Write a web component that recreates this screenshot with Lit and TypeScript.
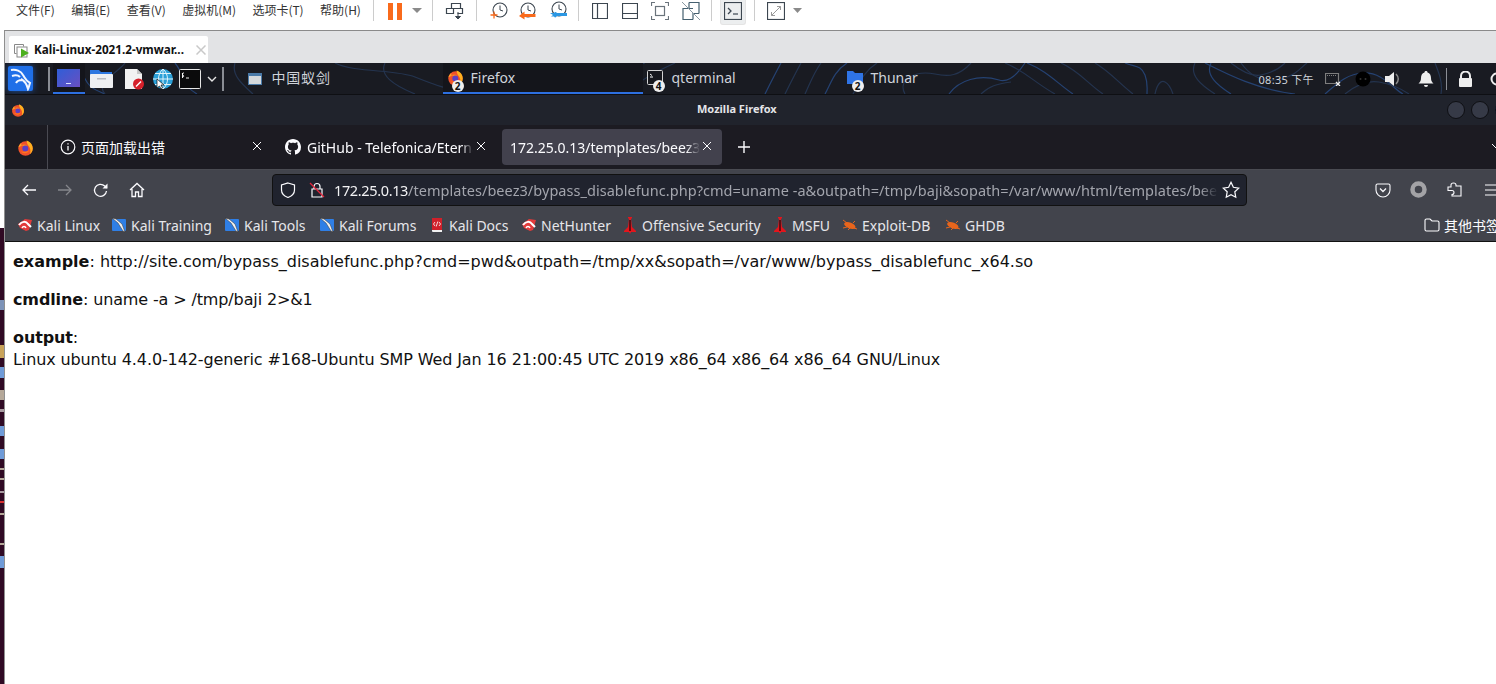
import { LitElement, html, css, svg } from "lit";
import { customElement } from "lit/decorators.js";

const ffIcon = (s: number) => html`<svg width=${s} height=${s} viewBox="0 0 16 16">
  <circle cx="8" cy="9" r="6.800" fill="#f0512a"/><path d="M9 1.500c3.500 1 5.800 4 5.800 7.500 0 2.200-1 4-2.600 5.200 1-2.600.5-5.800-1.600-8C9.800 5 9 3.500 9 1.500z" fill="#ffb01f"/><path d="M1.400 8c.4-2 1.400-3.400 2.800-4.200-.4 1-.2 1.800.4 2.400z" fill="#ffa024"/><path d="M4 5.800c1.500-1 4-1 5.500.2l-2 1z" fill="#ff8a24"/><circle cx="7.800" cy="9" r="2.800" fill="#5b3fc4"/><path d="M3.500 11.500c2.500 2.800 6.500 2.300 8-1-2 1.600-5.500 2-8 1z" fill="#ff7a1c"/></svg>`;

const kaliFav = html`<svg width="16" height="16" viewBox="0 0 16 16"><path d="M1 7 8 2l7 1-3 10-3 1-6-3z" fill="#e23b3b"/><path d="M2 8c3-4 7-4 9-1l3 3" fill="none" stroke="#fff" stroke-width="2"/><path d="M5 11c1-2 3-2 4 0" fill="none" stroke="#fff" stroke-width="1.500"/></svg>`;
const kaliBlue = html`<svg width="16" height="16" viewBox="0 0 16 16"><rect x="1" y="2" width="14" height="12" rx="1" fill="#2f7fe6"/><path d="M1 1l6 5 5 8 2 1-3-8-6-5z" fill="#f2f2f2" stroke="#333" stroke-width=".5"/></svg>`;
const docFav = html`<svg width="16" height="16" viewBox="0 0 16 16"><path d="M3 1h10v12H3z" fill="#d0202a"/><path d="M3 13h10v2H4a1 1 0 0 1-1-1z" fill="#f1f1f1"/><path d="M6 5 4.500 7 6 9M10 5l1.500 2L10 9M8.800 4.500 7.200 9.500" fill="none" stroke="#fff" stroke-width=".8"/></svg>`;
const offsec = html`<svg width="16" height="18" viewBox="0 0 16 18"><path d="M6 1h4v1l-1 1 1 8 4 4v1H9l-1 2-1-2H2v-1l4-4 1-8-1-1z" fill="#e3151c"/><path d="M8 4v11" stroke="#3a0a0c" stroke-width="1.500"/></svg>`;
const roach = html`<svg width="16" height="14" viewBox="0 0 16 14"><ellipse cx="8" cy="7.500" rx="6" ry="3" transform="rotate(22 8 7)" fill="#e8651c"/><path d="M1 2l4 3M1 10l4-1M6 12l2-2M13 3l-2 2M15 11l-3-1" stroke="#e8651c" stroke-width="1"/></svg>`;

/* width of each bookmark slot = distance to the next one */
const bookmarks: [unknown, string, number][] = [
  [kaliFav, "Kali Linux", 94],
  [kaliBlue, "Kali Training", 113],
  [kaliBlue, "Kali Tools", 95],
  [kaliBlue, "Kali Forums", 110],
  [docFav, "Kali Docs", 92],
  [kaliFav, "NetHunter", 101],
  [offsec, "Offensive Security", 150],
  [offsec, "MSFU", 70],
  [roach, "Exploit-DB", 103],
  [roach, "GHDB", 70],
];

/* fragments of the desktop text showing in the left margin: [height, colour] */
const scraps: [number, string][] = [
  [72, "#300a24"], [10, "#7d93b8"], [35, "#300a24"], [13, "#c9a35a"], [9, "#300a24"], [11, "#6f9bd8"], [12, "#300a24"], [10, "#b5a899"],
  [9, "#300a24"], [3, "#a89aa0"], [14, "#300a24"], [10, "#6f9bd8"], [13, "#300a24"], [10, "#6f9bd8"], [9, "#300a24"], [2, "#b5a899"], [8, "#300a24"], [2, "#b5a899"],
  [11, "#300a24"], [2, "#a89aa0"], [8, "#300a24"], [2, "#d83030"], [10, "#300a24"], [2, "#b5a899"], [28, "#300a24"], [2, "#b5a899"], [11, "#300a24"], [12, "#6f9bd8"],
];

const contours = [
  "M60 0C90 12 70 20 100 31", "M330 0c20 10 60 6 80 14s30 12 60 17", "M120 0c-10 12 -30 20 -20 31", "M170 0c10 12 6 22 22 31", "M230 0c-4 12 8 22 18 31", "M380 0c-6 12 8 22 30 31",
  "M560 31c6-10 20-26 60-31", "M590 31c8-10 26-24 50-31", "M620 31c10-10 30-22 50-31", "M760 31c4-8 10-20 16-31", "M780 31c4-8 10-20 16-31", "M800 31c4-8 8-20 16-31",
  "M820 31c6-10 8-22 22-31", "M848 31c6-10 10-22 24-31", "M900 31c-8-14 10-24 30-20 14 3 24 2 36-11", "M944 31c10-14 30-20 50-14 10 3 20-8 26-17",
  "M976 31c8-8 16-10 30-12", "M1000 0c20 8 30 20 50 31", "M1022 0c20 8 30 20 46 31", "M1056 0c18 8 26 20 42 31", "M1090 0c14 8 24 20 38 31",
  "M1120 0c10 4 16 2 20 12 3 8 2 12 2 19", "M1150 31c2-10 6-14 10-12 4 2 6 6 8 12", "M1190 0c-6 12 6 22 20 31", "M1206 0c-6 12 6 22 20 31",
  "M1226 0c10 8 20 14 30 12 10-2 18-6 24-12", "M1236 0c10 14 24 20 40 16s20-12 26-16", "M1320 31c10-8 20-20 38-21 20-1 30 16 40 21",
  "M1340 31c12-10 22-14 34-12s24 8 30 12", "M1430 0c4 10 8 20 6 31", "M1200 0c20 10 50 26 90 31",
];

@customElement("app-root")
export class AppRoot extends LitElement {
  static styles = css`
    :host { display: block; width: 1496px; height: 684px; overflow: hidden; background: #fff; font-family: "Noto Sans", "Noto Sans CJK SC", sans-serif; }
    svg { display: block; flex: none; }

    /* VMware toolbar */
    .vm { height: 30px; display: flex; align-items: center; background: #fff; color: #333; font: 12px/20px "Noto Sans CJK SC", "Noto Sans", sans-serif; padding: 0 0 9px 16px; box-sizing: border-box; }
    .menus { display: flex; width: 345px; justify-content: space-between; height: 20px; line-height: 20px; margin-top: -2px; white-space: nowrap; flex: none; }
    .sep { width: 1px; height: 21px; background: #ccc; flex: none; }
    .tools { display: flex; align-items: center; height: 21px; margin-left: 14px; }
    .btn-on { width: 26px; height: 25px; background: #eceeef; border: 1px solid #e4e4e4; border-top: none; border-radius: 0 0 3px 3px; display: flex; justify-content: center; box-sizing: border-box; padding-top: 2px; margin-top: 4px; flex: none; }

    .lower { display: flex; height: 654px; }
    .gutter { width: 4px; flex: none; display: flex; flex-direction: column; }
    .gutter .w { height: 198px; background: #fff; flex: none; }
    .gutter .p { flex: 1; background: #300a24; display: flex; flex-direction: column; }
    .gutter .p span { display: block; flex: none; }
    .main { flex: 1; min-width: 0; display: flex; flex-direction: column; border-left: 1px solid #8f8f8f; border-top: 1px solid #8a8a8a; }

    /* VMware tab strip */
    .vmtabs { height: 32px; background: #e2e3e5; display: flex; align-items: flex-end; padding-left: 4px; box-sizing: border-box; flex: none; }
    .vmtab { width: 199px; height: 27px; background: #fff; border-radius: 2px 2px 0 0; display: flex; align-items: center; box-sizing: border-box; padding-left: 5px; font: 700 11.700px/27px "Noto Sans", sans-serif; color: #111; white-space: nowrap; gap: 4px; }
    .vmtab .t { width: 154px; overflow: hidden; flex: none; }
    .vmtab .x { margin-left: 4px; }

    /* Kali panel */
    .panel { height: 31px; background: #191b22; position: relative; display: flex; align-items: center; flex: none; color: #cfd3da; border-bottom: 1px solid #0e0f13; overflow: hidden; }
    .contours { position: absolute; left: 0; top: 0; }
    .panel > *:not(.contours) { position: relative; }
    .kali { width: 25px; height: 25px; background: #1f6fe8; margin-left: 3px; border-radius: 2px; box-shadow: 0 0 6px #1f6fe8aa; display: flex; align-items: center; justify-content: center; flex: none; }
    .psep { width: 1.500px; height: 24px; background: #8a8d94; flex: none; }
    .launch { display: flex; align-items: center; justify-content: center; height: 31px; flex: none; box-sizing: border-box; }
    .launch.on { border-bottom: 2px solid #2d6fe0; background: #14151b; }
    .app { margin: -3px 0 0 10px; width: 172px; font: 14px "Noto Sans CJK SC", sans-serif; letter-spacing: .8px; flex: none; }
    .task { display: flex; align-items: center; height: 31px; width: 200px; box-sizing: border-box; font-size: 14px; flex: none; position: relative; padding: 0 0 1px 3px; gap: 4px; border-bottom: 2px solid transparent; }
    .task.on { border-bottom-color: #2d6fe0; background: #14151b; }
    .badge { position: absolute; left: 9px; top: 17px; width: 12px; height: 12px; border-radius: 50%; background: #eee; color: #111; font: 700 10px/12px "Noto Sans", sans-serif; text-align: center; }
    .clock { font-size: 11px; margin-left: 216px; white-space: nowrap; letter-spacing: .3px; flex: none; width: 57px; }
    .tray { display: flex; align-items: center; flex: none; }

    /* Firefox title */
    .title { height: 30px; background: #20232c; display: flex; align-items: center; position: relative; flex: none; padding: 0 0 1px 6px; box-sizing: border-box; color: #e4e5e8; font-size: 11px; font-weight: 700; overflow: hidden; }
    .title .name { position: absolute; left: 692px; top: 6px; white-space: nowrap; }
    .title .dots { margin-left: auto; display: flex; gap: 6px; margin-right: -17px; flex: none; }
    .dot { width: 18px; height: 18px; border-radius: 50%; background: #363a47; border: 1px solid #0e0f13; flex: none; box-sizing: border-box; }
    .dot.blue { background: #2f74e6; }

    /* Tabs */
    .tabs { height: 44px; background: #1c1b22; display: flex; align-items: center; flex: none; color: #fbfbfe; font-size: 14px; white-space: nowrap; position: relative; overflow: hidden; }
    .ffbtn { width: 43px; height: 44px; border-right: 1px solid #4a4a52; display: flex; align-items: center; justify-content: center; flex: none; box-sizing: border-box; padding-right: 2px; }
    .tab { height: 36px; display: flex; align-items: center; box-sizing: border-box; position: relative; flex: none; }
    .tab .lbl { overflow: hidden; flex: none; }
    .tab .close { position: absolute; top: 12px; }
    .fade { -webkit-mask-image: linear-gradient(90deg, #000 93%, transparent); mask-image: linear-gradient(90deg, #000 93%, transparent); }
    .tab.sel { background: #42414d; border-radius: 4px; }
    .chev { margin-left: auto; margin-right: -7px; }

    /* Nav */
    .nav { height: 40px; background: #42444c; display: flex; align-items: center; flex: none; color: #fbfbfe; border-top: 1px solid #4a4b52; box-sizing: border-box; }
    .url { width: 975px; height: 32px; background: #20232e; border: 1px solid #111; border-radius: 4px; box-sizing: border-box; display: flex; align-items: center; margin-left: 251px; font-size: 14.500px; letter-spacing: .04px; color: #a3a5ad; white-space: nowrap; flex: none; }
    .url b { font-weight: 400; color: #f2f2f4; letter-spacing: -.36px; }
    .url .txt { width: 884px; overflow: hidden; flex: none; -webkit-mask-image: linear-gradient(90deg, #000 98%, transparent); mask-image: linear-gradient(90deg, #000 98%, transparent); }
    .nav-l { display: flex; align-items: center; gap: 17px; margin-left: 16px; width: 0; }
    .nav-r { display: flex; align-items: center; margin-left: 128px; gap: 19px; flex: none; }

    /* Bookmarks */
    .bm { height: 33px; background: #42444c; display: flex; align-items: center; flex: none; color: #fbfbfe; font-size: 14px; padding-left: 12px; white-space: nowrap; border-bottom: 1px solid #111; box-sizing: border-box; overflow: hidden; }
    .bk { display: flex; align-items: center; gap: 4px; flex: none; color: #e6e6ea; }
    .other { margin-left: auto; display: flex; align-items: center; gap: 4px; margin-right: -4px; flex: none; }
    .cjk { font-family: "Noto Sans CJK SC", sans-serif; }

    /* Page */
    .page { flex: 1; background: #fff; color: #111; font: 16px/22px "DejaVu Sans", sans-serif; padding: 9px 8px 0; min-height: 0; }
    .page p { margin: 0 0 16px; white-space: nowrap; }
    .l2 { letter-spacing: -.13px; }
    .l3 { letter-spacing: -.113px; }
  `;

  private vmTools() {
    const g = "#3c4650";
    return html`<div class="tools">
      <svg width="14" height="18" viewBox="0 0 14 18"><rect x="0" y="1" width="5" height="17" fill="#f96a1b"/><rect x="9" y="1" width="5" height="17" fill="#f96a1b"/></svg>
      <svg width="10" height="6" viewBox="0 0 10 6" style="margin-left:10px"><path d="M0 0h10L5 5z" fill="#8a8a8a"/></svg>
      <div class="sep" style="margin-left:10px"></div>
      <svg width="20" height="20" viewBox="0 0 20 20" style="margin-left:12px"><path d="M1.500 7.500h7v5h-7zM6.500 2.500h9v5h-9zM8.500 7.500h9v5h-5" fill="none" stroke=${g} stroke-width="1.200"/><path d="M13 11v6M10.500 15.500 13 18l2.500-2.500z" fill=${g} stroke=${g}/></svg>
      <div class="sep" style="margin-left:11px"></div>
      <svg width="20" height="20" viewBox="0 0 20 20" style="margin-left:12px"><circle cx="11" cy="9" r="7" fill="none" stroke=${g} stroke-width="1.100"/><path d="M11 4.500V9l3 1" fill="none" stroke=${g}/><path d="M5 10.500v7M1.500 14h7" stroke="#f96a1b" stroke-width="1.300"/></svg>
      <svg width="20" height="20" viewBox="0 0 20 20" style="margin-left:9px"><circle cx="10" cy="9" r="7" fill="none" stroke=${g} stroke-width="1.100"/><path d="M10 4.500V9l3 1" fill="none" stroke=${g}/><path d="M17.500 13H6.500v-2.500L1 15l5.500 3.500V16h11z" fill="#f96a1b"/></svg>
      <svg width="20" height="20" viewBox="0 0 20 20" style="margin-left:11px"><circle cx="10" cy="8" r="7" fill="none" stroke=${g} stroke-width="1.100"/><path d="M10 3.500V8l3 1" fill="none" stroke=${g}/><path d="M1 12h4c1-1.500 2-1 3 0h10v3H8c-1 1.500-2 2-3 .5H2l2-1.500z" fill="#2b97e3"/></svg>
      <div class="sep" style="margin-left:9px"></div>
      <svg width="16" height="16" viewBox="0 0 16 16" style="margin-left:13px"><path d="M.5.500h15v15H.5zM5.500.500v15" fill="none" stroke=${g} stroke-width="1.200"/></svg>
      <svg width="16" height="16" viewBox="0 0 16 16" style="margin-left:14px"><path d="M.5.500h15v15H.5zM.5 10.500h15" fill="none" stroke=${g} stroke-width="1.200"/></svg>
      <svg width="18" height="18" viewBox="0 0 18 18" style="margin-left:13px"><path d="M4 .5H.5V4M14 .5h3.500V4M4 17.500H.5V14M14 17.500h3.500V14" fill="none" stroke="#6a737b" stroke-width="1.200"/><rect x="4.500" y="4.500" width="9" height="9" fill="none" stroke="#6a737b" stroke-width="1.200"/></svg>
      <svg width="18" height="18" viewBox="0 0 18 18" style="margin-left:13px"><path d="M7 .5h10v11M11 17.500H1v-11h10M1 6.500h6V.5M11 17.500V11.500h6" fill="none" stroke="#456070" stroke-width="1.200"/><path d="M0 0l18 18" stroke="#8a98a2" stroke-width="1"/></svg>
      <div class="sep" style="margin-left:11px"></div>
      <div class="btn-on" style="margin-left:8px"><svg width="18" height="18" viewBox="0 0 18 18"><rect x=".5" y=".5" width="17" height="17" fill="none" stroke=${g} stroke-width="1.200"/><path d="M4 6l3 3-3 3" fill="none" stroke=${g} stroke-width="1.300"/><path d="M9 12h5" stroke=${g} stroke-width="1.200"/></svg></div>
      <div class="sep" style="margin-left:8px"></div>
      <svg width="18" height="18" viewBox="0 0 18 18" style="margin-left:12px"><rect x=".5" y=".5" width="17" height="17" fill="none" stroke=${g} stroke-width="1.200"/><path d="M4.500 13.500l9-9M10 4.500h3.500V8M4.500 10v3.500H8" fill="none" stroke="#9a9a9a" stroke-width="1"/></svg>
      <svg width="9" height="5" viewBox="0 0 9 5" style="margin-left:8px"><path d="M0 0h9L4.500 5z" fill="#8a8a8a"/></svg>
    </div>`;
  }

  private panel() {
    return html`<div class="panel">
      <svg class="contours" width="1491" height="31" viewBox="0 0 1491 31">
        ${contours.map((d, i) => svg`<path d=${d} fill="none" stroke=${i % 3 === 0 ? "#254272" : "#24344f"} stroke-width="1.200"/>`)}
      </svg>
      <div class="kali"><svg width="24" height="24" viewBox="0 0 24 24"><path d="M2 3c5-1 10 1 12 5 2 3 3 6 7 8-1 3-1 4-2 6-1-4-3-8-7-10M3 9c3-1 6-1 8 1M13 13c-3 0-5 1-6 3" fill="none" stroke="#f1f6ff" stroke-width="2"/></svg></div>
      <div class="psep" style="margin-left:15px"></div>
      <div class="launch on" style="width:32px;margin-left:3.500px"><svg width="24" height="20" viewBox="0 0 24 20"><defs><linearGradient id="dk" x1="0" y1="0" x2="1" y2="1"><stop offset="0" stop-color="#2f5ed8"/><stop offset="1" stop-color="#6a4fc0"/></linearGradient></defs><rect x="0" y="1" width="23" height="18" fill="url(#dk)"/><rect x="9" y="15" width="5" height="1" fill="#dfe4ff"/></svg></div>
      <div class="launch" style="width:23px;margin-left:5px"><svg width="23" height="20" viewBox="0 0 23 20"><path d="M0 1h9l2 2h11v5H0z" fill="#2d78e0"/><rect x="0" y="5" width="23" height="14" rx="1" fill="#eef0f2"/><rect x="7" y="9" width="9" height="1.500" fill="#b9bcc2"/></svg></div>
      <div class="launch" style="width:22px;margin-left:10px"><svg width="22" height="22" viewBox="0 0 22 22"><path d="M2 1h12l5 5v15H2z" fill="#f2f2f2"/><path d="M14 1v5h5z" fill="#c8c8c8"/><circle cx="15.500" cy="16" r="5.500" fill="#d5202a"/><path d="M13 18.500l5-5" stroke="#fff" stroke-width="1.500"/></svg></div>
      <div class="launch" style="width:22px;margin-left:7px"><svg width="22" height="22" viewBox="0 0 22 22"><circle cx="11" cy="11" r="10" fill="#2aa0d8"/><path d="M1 11h20M11 1v20M3 5.500h16M3 16.500h16M11 1c-6 5-6 15 0 20M11 1c6 5 6 15 0 20" fill="none" stroke="#dff3fb" stroke-width="1"/><path d="M5 11v9l2.500-2 1.500 3 1.500-1-1.500-3H12z" fill="#fff" stroke="#111" stroke-width=".7"/></svg></div>
      <div class="launch" style="width:22px;margin-left:5px"><svg width="22" height="20" viewBox="0 0 22 20"><rect x=".5" y=".5" width="21" height="19" rx="1" fill="#0b0b0c" stroke="#e6e6e6"/><path d="M3.500 4v5M3 8c2 .5 2-1.500 1-2-1-.5-1-2.500 1-2M7 9h3" fill="none" stroke="#fff" stroke-width=".9"/></svg></div>
      <svg width="10" height="6" viewBox="0 0 10 6" style="margin-left:6px"><path d="M1 1l4 4 4-4" fill="none" stroke="#e6e6e6" stroke-width="1.400"/></svg>
      <div class="psep" style="margin-left:5px"></div>
      <svg width="14" height="12" viewBox="0 0 14 12" style="margin-left:24px"><rect x=".5" y=".5" width="13" height="11" fill="#d5d9dc" stroke="#4a7aa8"/><rect x="1" y="1" width="12" height="2" fill="#4a7aa8"/></svg>
      <div class="app">中国蚁剑</div>
      <div class="task on" style="margin-left:-1px">
        <span style="margin-left:1px">${ffIcon(17)}</span><span class="badge">2</span><span style="margin-left:3px">Firefox</span>
      </div>
      <div class="task">
        <svg width="16" height="15" viewBox="0 0 16 15" style="margin-left:1px"><rect x=".5" y=".5" width="15" height="14" rx="1" fill="#17181d" stroke="#d4d4d4"/><path d="M3 4l2 1.500M3 7h3" stroke="#fff"/></svg><span class="badge" style="left:10px">4</span><span style="margin-left:5px">qterminal</span>
      </div>
      <div class="task">
        <svg width="16" height="13" viewBox="0 0 16 13" style="margin-left:1px"><path d="M0 0h6l2 2h8v11H0z" fill="#2f74e6"/></svg><span class="badge">2</span><span style="margin-left:4px">Thunar</span>
      </div>
      <div class="clock">08:35 <span class="cjk">下午</span></div>
      <div class="tray">
        <svg width="16" height="14" viewBox="0 0 16 14" style="margin-left:9px"><path d="M.5 1.500h13v10H.5z" fill="none" stroke="#7d7d7d" stroke-width="1.200"/><path d="M2 3.500h10" stroke="#7d7d7d" stroke-dasharray="1 1"/><path d="M11 10l4 4M15 10l-4 4" stroke="#eee" stroke-width="1.300"/></svg>
        <svg width="16" height="16" viewBox="0 0 16 16" style="margin-left:14px"><circle cx="8" cy="8" r="7.500" fill="#000"/><circle cx="5.500" cy="8" r="1" fill="#333"/><circle cx="10.500" cy="8" r="1" fill="#333"/></svg>
        <svg width="18" height="16" viewBox="0 0 18 16" style="margin-left:14px"><path d="M0 5h4l5-4v14l-5-4H0z" fill="#eee"/><path d="M11 3c3 3 3 7 0 10" fill="none" stroke="#888" stroke-width="1.500"/></svg>
        <svg width="16" height="16" viewBox="0 0 16 16" style="margin-left:15px"><path d="M8 0c1 0 1.500.5 1.500 1.500 2.500.7 3.500 3 3.500 5.500 0 3 1 4 2.500 5.500H.5C2 11 3 10 3 7c0-2.500 1-4.800 3.500-5.500C6.500.5 7 0 8 0zM6 14h4a2 2 0 0 1-4 0z" fill="#eee"/></svg>
        <div class="psep" style="margin-left:12px;height:22px"></div>
        <svg width="15" height="16" viewBox="0 0 15 16" style="margin-left:11px"><path d="M3 7V5a4.500 4.500 0 0 1 9 0v2" fill="none" stroke="#eee" stroke-width="2"/><rect x="1" y="7" width="13" height="9" rx="1" fill="#eee"/></svg>
        <svg width="14" height="14" viewBox="0 0 14 14" style="margin-left:17px;flex:none"><circle cx="7" cy="7" r="5.500" fill="none" stroke="#eee" stroke-width="2"/></svg>
      </div>
    </div>`;
  }

  private tabs() {
    const x = html`<svg width="10" height="10" viewBox="0 0 10 10"><path d="M1 1l8 8M9 1l-8 8" stroke="#fbfbfe" stroke-width="1"/></svg>`;
    return html`<div class="tabs">
      <div class="ffbtn">${ffIcon(17)}</div>
      <div class="tab" style="width:228px;padding-left:12px">
        <svg width="16" height="16" viewBox="0 0 16 16"><circle cx="8" cy="8" r="6.800" fill="none" stroke="#fbfbfe" stroke-width="1.200"/><path d="M8 7v4.500M8 4.200v1.300" stroke="#fbfbfe" stroke-width="1.300"/></svg>
        <span class="lbl" style="margin-left:5px">页面加载出错</span>
        <span class="close" style="left:204px">${x}</span>
      </div>
      <div class="tab" style="width:226px;padding-left:9px">
        <svg width="16" height="16" viewBox="0 0 16 16"><path fill="#fbfbfe" d="M8 0C3.580 0 0 3.580 0 8c0 3.540 2.290 6.530 5.470 7.590.4.070.55-.17.55-.38 0-.19-.01-.82-.01-1.490-2.010.37-2.530-.49-2.690-.94-.09-.23-.48-.94-.82-1.130-.28-.15-.68-.52-.01-.53.63-.01 1.080.58 1.230.82.720 1.210 1.870.87 2.330.66.070-.52.280-.87.510-1.070-1.780-.2-3.640-.89-3.640-3.950 0-.87.310-1.590.82-2.150-.08-.2-.36-1.020.08-2.120 0 0 .67-.21 2.200.82.640-.18 1.320-.27 2-.27s1.360.09 2 .27c1.530-1.040 2.200-.82 2.200-.82.440 1.100.16 1.920.08 2.120.51.560.82 1.270.82 2.150 0 3.070-1.870 3.750-3.650 3.950.29.250.54.730.54 1.480 0 1.070-.01 1.930-.01 2.200 0 .21.150.46.550.38A8.010 8.010 0 0 0 16 8c0-4.420-3.580-8-8-8z"/></svg>
        <span class="lbl fade" style="margin-left:6px;width:166px">GitHub - Telefonica/Eternalblue</span>
        <span class="close" style="left:200px">${x}</span>
      </div>
      <div class="tab sel" style="width:220px;padding-left:8px">
        <span class="lbl fade" style="width:190px">172.25.0.13/templates/beez3/bypass</span>
        <span class="close" style="left:200px">${x}</span>
      </div>
      <svg width="14" height="14" viewBox="0 0 14 14" style="margin-left:15px"><path d="M7 1v12M1 7h12" stroke="#fbfbfe" stroke-width="1.400"/></svg>
      <svg class="chev" width="12" height="8" viewBox="0 0 12 8"><path d="M1 1l5 5 5-5" fill="none" stroke="#fbfbfe" stroke-width="1"/></svg>
    </div>`;
  }

  private nav() {
    const c = "#fbfbfe";
    return html`<div class="nav">
      <div class="nav-l">
        <svg width="16" height="16" viewBox="0 0 16 16"><path d="M15 8H2M7 3 2 8l5 5" fill="none" stroke=${c} stroke-width="1.300"/></svg>
        <svg width="16" height="16" viewBox="0 0 16 16" style="margin-left:3px"><path d="M1 8h13M9 3l5 5-5 5" fill="none" stroke="#85868c" stroke-width="1.300"/></svg>
        <svg width="16" height="16" viewBox="0 0 16 16" style="margin-left:3px"><path d="M13.500 9a6 6 0 1 1-1.800-5l2 2" fill="none" stroke=${c} stroke-width="1.300"/><path d="M14.500 1.500v5h-5z" fill=${c}/></svg>
        <svg width="16" height="16" viewBox="0 0 16 16" style="margin-left:3px"><path d="M1 8l7-6.500L15 8M3 7v7.500h3.500V10h3v4.500H13V7" fill="none" stroke=${c} stroke-width="1.300"/></svg>
      </div>
      <div class="url">
        <svg width="16" height="16" viewBox="0 0 16 16" style="margin-left:7px"><path d="M8 1l6.500 2v5c0 3.500-2.500 6-6.500 7.500C4 14 1.500 11.500 1.500 8V3z" fill="none" stroke=${c} stroke-width="1.200"/></svg>
        <svg width="16" height="16" viewBox="0 0 16 16" style="margin-left:13px"><path d="M5 7V4.500a3 3 0 0 1 6 0V7M3 7h10v8H3z" fill="none" stroke=${c} stroke-width="1.200"/><path d="M1 1l14 14" stroke="#e5243b" stroke-width="1.300"/></svg>
        <span class="txt" style="margin-left:9px"><b>172.25.0.13</b>/templates/beez3/bypass_disablefunc.php?cmd=uname -a&outpath=/tmp/baji&sopath=/var/www/html/templates/beez3/bypass_disablefunc_x64.so</span>
        <svg width="18" height="18" viewBox="0 0 16 16" style="margin-left:4px"><path d="M8 1.200l2.100 4.400 4.800.7-3.500 3.300.8 4.800L8 12.100l-4.200 2.300.8-4.800L1.100 6.300l4.800-.7z" fill="none" stroke=${c} stroke-width="1.100"/></svg>
      </div>
      <div class="nav-r">
        <svg width="16" height="16" viewBox="0 0 16 16"><path d="M2.500 2h11A1.500 1.500 0 0 1 15 3.500V8A7 7 0 0 1 1 8V3.500A1.500 1.500 0 0 1 2.500 2z" fill="none" stroke=${c} stroke-width="1.100"/><path d="M5 6.500l3 3 3-3" fill="none" stroke=${c} stroke-width="1.300"/></svg>
        <svg width="17" height="17" viewBox="0 0 17 17"><circle cx="8.500" cy="8.500" r="6" fill="none" stroke="#a3a3a6" stroke-width="4.500"/></svg>
        <svg width="16" height="17" viewBox="0 0 16 17" style="margin-left:1px"><path d="M1 7h3V5.500a2 2 0 0 1 0-.5c0-1 1-2 2.500-2S9 3.500 9 5v1h5v10H5v-1.500c1 0 2-1 2-2s-1-2-2-2H1z" fill="none" stroke=${c} stroke-width="1.100" transform="translate(0 -1)"/></svg>
        <svg width="16" height="12" viewBox="0 0 16 12" style="margin-left:2px"><path d="M1 1h15M1 6h15M1 11h15" stroke=${c} stroke-width="1.200"/></svg>
      </div>
    </div>`;
  }

  render() {
    return html`
      <div class="vm">
        <div class="menus"><span>文件(F)</span><span>编辑(E)</span><span>查看(V)</span><span>虚拟机(M)</span><span>选项卡(T)</span><span>帮助(H)</span></div>
        <div class="sep" style="margin-left:12px"></div>
        ${this.vmTools()}
      </div>
      <div class="lower">
        <div class="gutter">
          <div class="w"></div>
          <div class="p">${scraps.map(([h, c]) => html`<span style="height:${h}px;background:${c}"></span>`)}</div>
        </div>
        <div class="main">
          <div class="vmtabs">
            <div class="vmtab">
              <svg width="16" height="16" viewBox="0 0 16 16"><path d="M.5 2.500h9v2M.5 2.500v9h2" fill="none" stroke="#888"/><rect x="3" y="5" width="10" height="10" fill="#fff" stroke="#888"/><path d="M7 6.500l8 4.500-8 4.500z" fill="#4caf1e"/></svg>
              <span class="t">Kali-Linux-2021.2-vmwar...</span>
              <svg class="x" width="10" height="10" viewBox="0 0 10 10"><path d="M.5.500l9 9M9.500.500l-9 9" stroke="#c9c9c9" stroke-width="1.500"/></svg>
            </div>
          </div>
          ${this.panel()}
          <div class="title">${ffIcon(14)}<span class="name">Mozilla Firefox</span><div class="dots"><span class="dot"></span><span class="dot"></span><span class="dot blue"></span></div></div>
          ${this.tabs()}
          ${this.nav()}
          <div class="bm">
            ${bookmarks.map(([ic, t, w]) => html`<div class="bk" style="width:${w}px">${ic}<span>${t}</span></div>`)}
            <div class="other"><svg width="16" height="14" viewBox="0 0 16 14"><path d="M1 2.500A1.500 1.500 0 0 1 2.500 1H6l2 2h5.500A1.500 1.500 0 0 1 15 4.500v7a1.500 1.500 0 0 1-1.500 1.500h-11A1.500 1.500 0 0 1 1 11.500z" fill="none" stroke="#fbfbfe" stroke-width="1.100"/></svg><span class="cjk">其他书签</span></div>
          </div>
          <div class="page">
            <p><b>example</b>: http://site.com/bypass_disablefunc.php?cmd=pwd&outpath=/tmp/xx&sopath=/var/www/bypass_disablefunc_x64.so</p>
            <p class="l2"><b>cmdline</b>: uname -a > /tmp/baji 2>&1</p>
            <p class="l3"><b>output</b>:<br>Linux ubuntu 4.4.0-142-generic #168-Ubuntu SMP Wed Jan 16 21:00:45 UTC 2019 x86_64 x86_64 x86_64 GNU/Linux</p>
          </div>
        </div>
      </div>
    `;
  }
}
